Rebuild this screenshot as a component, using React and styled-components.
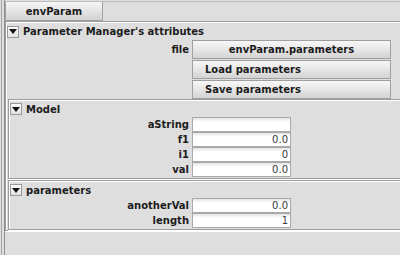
import React from 'react';
import styled, { createGlobalStyle } from 'styled-components';

const Global = createGlobalStyle`
  html, body { margin: 0; padding: 0; background: #dedede; overflow: hidden; }
  body { font-family: "DejaVu Sans", "Liberation Sans", sans-serif; font-size: 10px; color: #1c1c1c; }
`;

const Root = styled.div`
  width: 400px;
  height: 255px;
  padding-left: 1px;
  background: #dedede;
  box-sizing: border-box;
`;

const Frame = styled.div`
  height: 100%;
  border-left: 1px solid #a6a6a6;
  padding-left: 2px;
`;

const Body = styled.div`
  height: 100%;
  border-left: 1px solid #8e8e8e;
  display: flex;
  flex-direction: column;
`;

const TabStrip = styled.div`
  margin-top: 1px;
  border-top: 1px solid #bcbcbc;
  display: flex;
`;

const Tab = styled.div`
  width: 98px;
  height: 19px;
  box-sizing: border-box;
  border: 1px solid #a2a2a2;
  border-top: none;
  background: linear-gradient(#f6f6f6, #e6e6e6 45%, #d2d2d2);
  display: flex;
  align-items: center;
  justify-content: center;
  font-weight: bold;
`;

/* etched (lowered) border; the right side runs off the window, as in the reference */
const Etched = styled.div`
  border: 1px solid #9c9c9c;
  border-right: none;
  box-shadow: inset 1px 1px 0 #ffffff, 0 1px 0 #ffffff;
  padding: 1px 0 ${p => p.$padB || 0}px 1px;
  margin: ${p => p.$mt || 0}px 0 0 ${p => p.$ml || 0}px;
  display: flex;
  flex-direction: column;
`;

const Header = styled.div`
  height: ${p => p.$h}px;
  display: flex;
  align-items: center;
  gap: 4px;
  font-weight: bold;
`;

const Toggle = styled.div`
  width: 12px;
  height: 12px;
  box-sizing: border-box;
  border: 1px solid #9a9a9a;
  background: linear-gradient(#fbfbfb, #e2e2e2);
  display: flex;
  align-items: center;
  justify-content: center;
`;

const Rows = styled.div`
  display: flex;
  flex-direction: column;
  gap: ${p => p.$gap || 0}px;
`;

const Row = styled.div`
  display: grid;
  grid-template-columns: ${p => p.$labelW}px auto;
  column-gap: 3px;
  align-items: center;
`;

const Label = styled.div`
  text-align: right;
  font-weight: bold;
`;

const Button = styled.div`
  width: 199px;
  height: 19px;
  box-sizing: border-box;
  border: 1px solid #a0a0a0;
  background: linear-gradient(#f7f7f7, #e8e8e8 45%, #d3d3d3);
  display: flex;
  align-items: center;
  justify-content: ${p => (p.$center ? 'center' : 'flex-start')};
  padding-left: ${p => (p.$center ? 0 : 12)}px;
  font-weight: bold;
`;

const Input = styled.div`
  width: 99px;
  height: 15px;
  box-sizing: border-box;
  border: 1px solid #a9a9a9;
  background: linear-gradient(#e4e4e4, #ffffff 4px, #ffffff);
  display: flex;
  align-items: center;
  justify-content: flex-end;
  padding-right: 2px;
  color: #3a3a3a;
`;

const TriangleIcon = () => (
  <svg width="8" height="5" viewBox="0 0 8 5">
    <polygon points="0,0 8,0 4,5" fill="#111" />
  </svg>
);

const Section = ({ title, headH, children, ...rest }) => (
  <Etched {...rest}>
    <Header $h={headH}>
      <Toggle><TriangleIcon /></Toggle>
      <span>{title}</span>
    </Header>
    {children}
  </Etched>
);

const Field = ({ label, value, labelW }) => (
  <Row $labelW={labelW}>
    <Label>{label}</Label>
    <Input>{value}</Input>
  </Row>
);

export default function App() {
  return (
    <Root>
      <Global />
      <Frame>
        <Body>
          <TabStrip>
            <Tab>envParam</Tab>
          </TabStrip>
          <Etched $padB={0}>
            <Header $h={17}>
              <Toggle><TriangleIcon /></Toggle>
              <span>Parameter Manager's attributes</span>
            </Header>
            <Rows $gap={1}>
              <Row $labelW={182}>
                <Label>file</Label>
                <Button $center>envParam.parameters</Button>
              </Row>
              <Row $labelW={182}>
                <span />
                <Button>Load parameters</Button>
              </Row>
              <Row $labelW={182}>
                <span />
                <Button>Save parameters</Button>
              </Row>
            </Rows>
            <Section title="Model" headH={16} $ml={1} $padB={1}>
              <Rows>
                <Field labelW={179} label="aString" value="" />
                <Field labelW={179} label="f1" value="0.0" />
                <Field labelW={179} label="i1" value="0" />
                <Field labelW={179} label="val" value="0.0" />
              </Rows>
            </Section>
            <Section title="parameters" headH={16} $ml={1} $mt={1} $padB={1}>
              <Rows>
                <Field labelW={179} label="anotherVal" value="0.0" />
                <Field labelW={179} label="length" value="1" />
              </Rows>
            </Section>
          </Etched>
        </Body>
      </Frame>
    </Root>
  );
}
